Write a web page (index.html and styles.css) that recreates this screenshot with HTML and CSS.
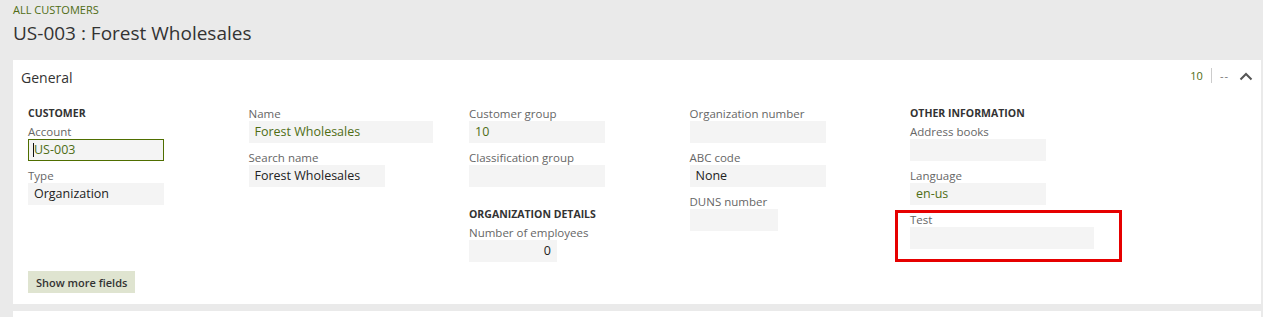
FILE: index.html
```html
<!DOCTYPE html>
<html>
<head>
  <title>US-003 : Forest Wholesales</title>
  <link rel="stylesheet" href="styles.css">
</head>
<body>
  <div class="page-head">
    <a class="crumb" href="#">ALL CUSTOMERS</a>
    <h1 class="title">US-003 : Forest Wholesales</h1>
  </div>

  <div class="card">
    <div class="card-head">
      <h2 class="card-title">General</h2>
      <div class="card-tools">
        <span class="count">10</span>
        <span class="divider"></span>
        <span class="dash">--</span>
        <svg class="chevron" width="14" height="10" viewBox="0 0 14 10">
          <polyline points="1.5,8.5 7,3 12.5,8.5" fill="none" stroke="#555" stroke-width="2"/>
        </svg>
      </div>
    </div>

    <div class="card-body">
      <div class="col">
        <div class="group">CUSTOMER</div>
        <div class="field">
          <label>Account</label>
          <div class="box focus w-md"><span class="caret"></span>US-003</div>
        </div>
        <div class="field">
          <label>Type</label>
          <div class="box w-md">Organization</div>
        </div>
      </div>

      <div class="col">
        <div class="field">
          <label>Name</label>
          <div class="box w-lg green">Forest Wholesales</div>
        </div>
        <div class="field">
          <label>Search name</label>
          <div class="box w-md">Forest Wholesales</div>
        </div>
      </div>

      <div class="col">
        <div class="field">
          <label>Customer group</label>
          <div class="box w-md green">10</div>
        </div>
        <div class="field">
          <label>Classification group</label>
          <div class="box w-md"></div>
        </div>
        <div class="group spaced">ORGANIZATION DETAILS</div>
        <div class="field">
          <label>Number of employees</label>
          <div class="box w-sm num">0</div>
        </div>
      </div>

      <div class="col">
        <div class="field">
          <label>Organization number</label>
          <div class="box w-md"></div>
        </div>
        <div class="field">
          <label>ABC code</label>
          <div class="box w-md">None</div>
        </div>
        <div class="field">
          <label>DUNS number</label>
          <div class="box w-sm"></div>
        </div>
      </div>

      <div class="col">
        <div class="group">OTHER INFORMATION</div>
        <div class="field">
          <label>Address books</label>
          <div class="box w-md"></div>
        </div>
        <div class="field">
          <label>Language</label>
          <div class="box w-md green">en-us</div>
        </div>
        <div class="field flagged">
          <label>Test</label>
          <div class="box w-lg"></div>
        </div>
      </div>
    </div>

    <button class="more-btn">Show more fields</button>
  </div>

  <div class="card next"></div>
</body>
</html>
```

FILE: styles.css
```css
html, body {
  margin: 0;
  padding: 0;
}

body {
  background-color: #eaeaea;
  font-family: "Open Sans", Arial, sans-serif;
  color: #333;
  overflow: hidden;
}

.page-head {
  padding: 2px 13px 0 13px;
  height: 58px;
  box-sizing: border-box;
}

.crumb {
  display: block;
  font-size: 11px;
  line-height: 16px;
  color: #4f6d14;
  text-decoration: none;
}

.title {
  margin: 2px 0 0 0;
  font-size: 19px;
  font-weight: 400;
  line-height: 26px;
  color: #333;
}

.card {
  margin: 2px 2px 0 13px;
  background-color: #fff;
  height: 244px;
  box-sizing: border-box;
  padding: 0 15px 0 15px;
}

.card.next {
  margin-top: 7px;
  height: 20px;
}

.card-head {
  display: flex;
  justify-content: space-between;
  align-items: center;
  height: 47px;
  margin-left: -7px;
}

.card-title {
  margin: 0;
  font-size: 14px;
  font-weight: 400;
  color: #333;
  position: relative;
  top: -6px;
}

.card-tools {
  display: flex;
  align-items: center;
  gap: 8px;
  position: relative;
  top: -8px;
  margin-right: -7px;
}

.count {
  font-size: 11px;
  color: #4f6d14;
}

.divider {
  width: 1px;
  height: 15px;
  background-color: #ccc;
}

.dash {
  font-size: 11px;
  color: #777;
  letter-spacing: 1px;
  margin-right: 2px;
}

.chevron {
  display: block;
}

.card-body {
  display: grid;
  grid-template-columns: repeat(5, 220.5px);
  align-items: start;
}

.col {
  display: flex;
  flex-direction: column;
}

.group {
  height: 18px;
  font-size: 10.5px;
  font-weight: 700;
  line-height: 12px;
  color: #333;
}

.group.spaced {
  margin-top: 13px;
}

.field {
  margin-bottom: 8px;
}

.field label {
  display: block;
  height: 14px;
  font-size: 11.5px;
  line-height: 13px;
  color: #666;
}

.box {
  height: 22px;
  box-sizing: border-box;
  background-color: #f4f4f4;
  padding: 0 6px;
  font-size: 12.5px;
  line-height: 22px;
  color: #222;
  white-space: nowrap;
}

.box.green {
  color: #4f6d14;
}

.box.focus {
  border: 1px solid #4f6e00;
  line-height: 20px;
  padding-left: 4px;
  color: #4f6d14;
}

.caret {
  display: inline-block;
  width: 1px;
  height: 14px;
  background-color: #111;
  vertical-align: -3px;
}

.box.num {
  text-align: right;
}

.w-sm {
  width: 88px;
}

.w-md {
  width: 136px;
}

.w-lg {
  width: 184px;
}

.flagged {
  position: relative;
}

.flagged::after {
  content: "";
  position: absolute;
  left: -15px;
  top: -3px;
  width: 227px;
  height: 52px;
  box-sizing: border-box;
  border: 3px solid #e60000;
}

.more-btn {
  display: block;
  margin-top: 1px;
  height: 22px;
  padding: 0 8px;
  border: none;
  background-color: #dfe4d0;
  font-family: "Open Sans", Arial, sans-serif;
  font-size: 11px;
  font-weight: 600;
  color: #333;
}
```
